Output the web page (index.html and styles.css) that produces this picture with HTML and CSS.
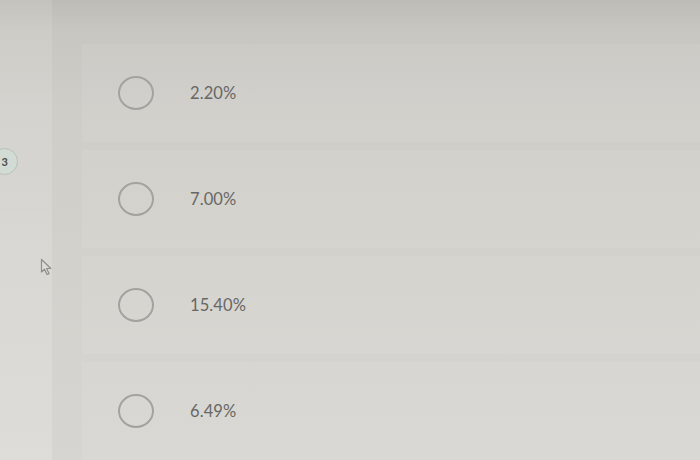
FILE: index.html
```html
<!DOCTYPE html>
<html>
<head>
<meta charset="utf-8">
<link rel="stylesheet" href="styles.css">
</head>
<body>
<div class="app">
  <aside class="sidebar">
    <span class="badge">3</span>
  </aside>
  <main class="main">
    <div class="option"><span class="radio"></span><span class="label">2.20%</span></div>
    <div class="option"><span class="radio"></span><span class="label">7.00%</span></div>
    <div class="option"><span class="radio"></span><span class="label">15.40%</span></div>
    <div class="option"><span class="radio"></span><span class="label">6.49%</span></div>
  </main>
  <svg class="cursor" width="14" height="18" viewBox="0 0 14 18"><path d="M1.5 1.5 L1.5 14 L4.5 11.2 L7 16.5 L9 15.6 L6.6 10.5 L10.8 10.5 Z" fill="#dedcd8" stroke="#8f8e8b" stroke-width="1.2" stroke-linejoin="round"/></svg>
</div>
</body>
</html>
```
FILE: styles.css
```css
html, body {
  margin: 0;
  padding: 0;
}
body {
  width: 700px;
  height: 460px;
  overflow: hidden;
  background: linear-gradient(180deg, #bdbcb6 0px, #c7c6c0 30px, #cfcdc8 110px, #d3d1cc 260px, #d7d5d1 460px);
  font-family: Lato, "Open Sans", sans-serif;
}
.app {
  position: relative;
  display: flex;
  height: 460px;
}
.sidebar {
  position: relative;
  width: 52px;
  flex: none;
  background: linear-gradient(180deg, rgba(255,255,255,0.10), rgba(255,255,255,0.18));
}
.badge {
  position: absolute;
  left: -9px;
  top: 148px;
  width: 27px;
  height: 27px;
  border-radius: 50%;
  background: #d3dbd5;
  border: 1px solid #b7c0b9;
  color: #4a4f4c;
  font-size: 11px;
  font-weight: 700;
  display: flex;
  align-items: center;
  justify-content: flex-end;
  padding-right: 9px;
  box-sizing: border-box;
}
.main {
  flex: 1;
  display: flex;
  flex-direction: column;
  gap: 8px;
  padding: 44px 0 0 30px;
}
.option {
  display: flex;
  align-items: center;
  height: 100px;
  padding-left: 36px;
  background: rgba(255,255,255,0.07);
}
.radio {
  width: 32px;
  height: 30px;
  border-radius: 50%;
  border: 2px solid #a3a29f;
  flex: none;
}
.label {
  margin-left: 36px;
  font-size: 16.5px;
  color: #676765;
  letter-spacing: 0.1px;
}
.cursor {
  position: absolute;
  left: 40px;
  top: 258px;
}
```
